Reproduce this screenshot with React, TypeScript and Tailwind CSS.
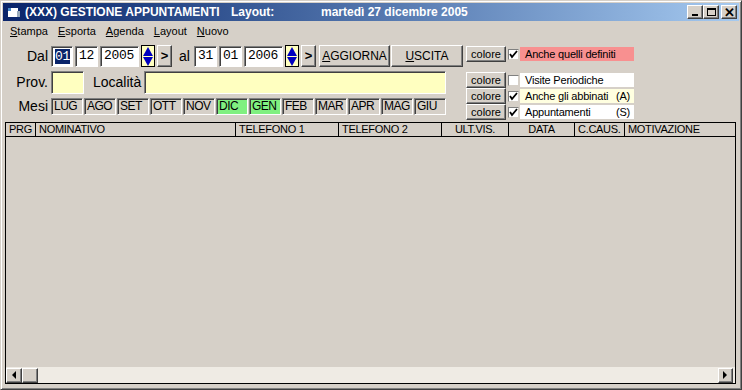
import React from "react";

const RAISED =
  "border border-t-white border-l-white border-b-[#404040] border-r-[#404040] shadow-[inset_-1px_-1px_0_#808080]";
const SUNKEN =
  "border border-t-[#808080] border-l-[#808080] border-b-white border-r-white shadow-[inset_1px_1px_0_#404040]";

const MESI = ["LUG", "AGO", "SET", "OTT", "NOV", "DIC", "GEN", "FEB", "MAR", "APR", "MAG", "GIU"];
const VERDI = ["DIC", "GEN"];

const COLONNE = [
  { label: "PRG", w: "w-[30px]", align: "text-left" },
  { label: "NOMINATIVO", w: "w-[200px]", align: "text-left" },
  { label: "TELEFONO 1", w: "w-[103px]", align: "text-left" },
  { label: "TELEFONO 2", w: "w-[103px]", align: "text-left" },
  { label: "ULT.VIS.", w: "w-[67px]", align: "text-center" },
  { label: "DATA", w: "w-[66px]", align: "text-center" },
  { label: "C.CAUS.", w: "w-[50px]", align: "text-left" },
  { label: "MOTIVAZIONE", w: "flex-1", align: "text-left" },
];

function Campo({ v, w, sel }: { v: string; w: string; sel?: boolean }) {
  return (
    <div className={`${SUNKEN} ${w} h-[21px] bg-white pl-[3px] flex items-center font-['Liberation_Mono',monospace] text-[13px] tracking-[-0.3px]`}>
      <span className={sel ? "bg-[#0a246a] text-white leading-[15px]" : "text-black"}>{v}</span>
    </div>
  );
}

function Spin() {
  return (
    <div className="w-[14px] h-[22px] bg-[#ffffc0] border border-black flex flex-col items-center justify-center gap-[1px]">
      <svg width="10" height="9" viewBox="0 0 10 9">
        <polygon points="5,0 10,9 0,9" fill="#0000c0" />
      </svg>
      <svg width="10" height="9" viewBox="0 0 10 9">
        <polygon points="0,0 10,0 5,9" fill="#0000c0" />
      </svg>
    </div>
  );
}

function Freccia() {
  return (
    <div className={`${RAISED} w-[15px] h-[22px] bg-[#d6d0c8] flex items-center justify-center text-[13px] font-bold`}>
      &gt;
    </div>
  );
}

function Colore() {
  return (
    <div className={`${RAISED} w-[40px] h-[16px] bg-[#d6d0c8] flex items-center justify-center text-[11px]`}>
      colore
    </div>
  );
}

function Check({ on }: { on: boolean }) {
  return (
    <div className="w-[11px] h-[11px] bg-white border border-t-[#808080] border-l-[#808080] border-b-[#d6d0c8] border-r-[#d6d0c8] flex items-center justify-center">
      {on && (
        <svg width="9" height="9" viewBox="0 0 9 9">
          <polyline points="1,4 3,7 8,1" fill="none" stroke="black" strokeWidth="1.8" />
        </svg>
      )}
    </div>
  );
}

function Opzione({ on, label, bg, extra }: { on: boolean; label: string; bg: string; extra?: string }) {
  return (
    <div className="flex items-center h-[16px]">
      <Colore />
      <div className="ml-[2px]">
        <Check on={on} />
      </div>
      <div className={`ml-[1px] w-[114px] h-[14px] ${bg} pl-[5px] pr-[4px] flex items-center justify-between text-[11px] tracking-[-0.2px]`}>
        <span>{label}</span>
        {extra && <span>{extra}</span>}
      </div>
    </div>
  );
}

export default function App() {
  return (
    <div className="w-[742px] h-[390px] bg-[#d6d0c8] border border-t-[#d6d0c8] border-l-[#d6d0c8] border-b-[#404040] border-r-[#404040] shadow-[inset_1px_1px_0_white,inset_-1px_-1px_0_#808080] p-[2px] flex flex-col font-['Liberation_Sans',sans-serif] text-black overflow-hidden">
      {/* barra del titolo */}
      <div className="h-[18px] bg-gradient-to-r from-[#0a246a] to-[#a6caf0] flex items-center pl-[3px] pr-[2px] text-white text-[12px] font-bold">
        <svg width="16" height="14" viewBox="0 0 16 14" className="mr-[3px]">
          <rect x="2" y="3" width="10" height="9" fill="white" />
          <rect x="2" y="3" width="3" height="3" fill="#4a8ac8" />
          <rect x="11" y="6" width="3" height="6" fill="#9ab" />
        </svg>
        <span className="w-[206px]">(XXX) GESTIONE APPUNTAMENTI</span>
        <span className="w-[90px]">Layout:</span>
        <span>martedì 27 dicembre 2005</span>
        <div className="ml-auto flex">
          {["_", "□", "×"].map((c, i) => (
            <div
              key={c}
              className={`${RAISED} w-[16px] h-[14px] bg-[#d6d0c8] text-black flex items-center justify-center text-[12px] leading-none ${i === 2 ? "ml-[2px]" : ""}`}
            >
              {i === 0 && <div className="w-[6px] h-[2px] bg-black mt-[6px]" />}
              {i === 1 && <div className="w-[9px] h-[8px] border border-black border-t-2" />}
              {i === 2 && <span className="font-bold text-[13px]">✕</span>}
            </div>
          ))}
        </div>
      </div>

      {/* menu */}
      <div className="h-[20px] flex items-center pl-[7px] gap-[10px] text-[11px]">
        {["Stampa", "Esporta", "Agenda", "Layout", "Nuovo"].map((m) => (
          <span key={m}>
            <span className="underline">{m[0]}</span>
            {m.slice(1)}
          </span>
        ))}
      </div>

      {/* filtri */}
      <div className="flex mt-[4px] h-[76px]">
        <div className="w-[461px] flex flex-col">
          <div className="flex items-center h-[22px]">
            <span className="w-[48px] text-right pr-[3px] text-[14px]">Dal</span>
            <div className="flex items-center gap-[2px]">
              <Campo v="01" w="w-[22px]" sel />
              <Campo v="12" w="w-[23px]" />
              <Campo v="2005" w="w-[39px]" />
              <Spin />
              <Freccia />
            </div>
            <span className="ml-[7px] w-[15px] text-[14px]">al</span>
            <div className="flex items-center gap-[2px]">
              <Campo v="31" w="w-[23px]" />
              <Campo v="01" w="w-[23px]" />
              <Campo v="2006" w="w-[39px]" />
              <Spin />
              <Freccia />
            </div>
            <div className={`${RAISED} ml-[3px] w-[71px] h-[22px] flex items-center justify-center text-[12px]`}>
              <span>
                <span className="underline">A</span>GGIORNA
              </span>
            </div>
            <div className={`${RAISED} ml-[1px] w-[72px] h-[22px] flex items-center justify-center text-[12px]`}>
              <span>
                <span className="underline">U</span>SCITA
              </span>
            </div>
          </div>
          <div className="flex items-center h-[23px] mt-[4px]">
            <span className="w-[48px] text-right pr-[3px] text-[14px]">Prov.</span>
            <div className={`${SUNKEN} w-[33px] h-[23px] bg-[#ffffc0]`} />
            <span className="ml-[9px] w-[51px] text-[14px]">Località</span>
            <div className={`${SUNKEN} w-[302px] h-[23px] bg-[#ffffc0]`} />
          </div>
          <div className="flex items-center h-[18px] mt-[3px]">
            <span className="w-[48px] text-right pr-[3px] text-[14px]">Mesi</span>
            <div className="flex gap-[1px]">
              {MESI.map((m) => (
                <div
                  key={m}
                  className={`${SUNKEN} w-[32px] h-[17px] flex items-center pl-[2px] text-[12px] tracking-[-0.5px] ${VERDI.includes(m) ? "bg-[#80f080]" : "bg-[#d6d0c8]"}`}
                >
                  {m}
                </div>
              ))}
            </div>
          </div>
        </div>

        <div className="ml-[2px] flex flex-col pt-[1px]">
          <div className="flex items-center h-[16px]">
            <Colore />
            <div className="ml-[2px]">
              <Check on />
            </div>
            <div className="ml-[1px] w-[114px] h-[14px] bg-[#f89090] pl-[5px] flex items-center text-[11px] tracking-[-0.2px]">
              Anche quelli definiti
            </div>
          </div>
          <div className="mt-[10px] flex flex-col">
            <Opzione on={false} label="Visite Periodiche" bg="bg-white" />
            <Opzione on label="Anche gli abbinati" extra="(A)" bg="bg-[#ffffe0]" />
            <Opzione on label="Appuntamenti" extra="(S)" bg="bg-white" />
          </div>
        </div>
      </div>

      {/* griglia */}
      <div className="mt-[1px] ml-[2px] mr-[3px] flex-1 border border-black flex flex-col">
        <div className="flex h-[14px] border-b border-black text-[11px] leading-[13px] tracking-[-0.3px]">
          {COLONNE.map((c, i) => (
            <div
              key={c.label}
              className={`${c.w} ${c.align} px-[3px] ${i < COLONNE.length - 1 ? "border-r border-black" : ""}`}
            >
              {c.label}
            </div>
          ))}
        </div>
        <div className="flex-1" />
        <div className="h-[16px] flex items-center bg-[#efebe4]">
          <div className={`${RAISED} w-[16px] h-[15px] bg-[#d6d0c8] flex items-center justify-center`}>
            <svg width="5" height="8" viewBox="0 0 5 8">
              <polygon points="4,0 4,8 0,4" fill="black" />
            </svg>
          </div>
          <div className={`${RAISED} w-[16px] h-[15px] bg-[#d6d0c8]`} />
          <div className="flex-1" />
          <div className={`${RAISED} w-[15px] h-[15px] bg-[#d6d0c8] flex items-center justify-center`}>
            <svg width="5" height="8" viewBox="0 0 5 8">
              <polygon points="0,0 0,8 4,4" fill="black" />
            </svg>
          </div>
          <div className="w-[2px]" />
        </div>
      </div>
      <div className="h-[3px]" />
    </div>
  );
}
